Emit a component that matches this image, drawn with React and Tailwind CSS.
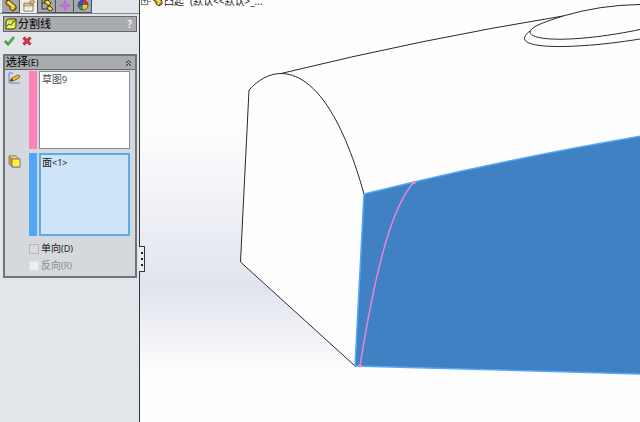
import { useState } from "react";

const uiFont = "font-['Noto_Sans','Noto_Sans_CJK_SC',sans-serif]";

function PartIcon() {
  return (
    <svg viewBox="0 0 14 12" className="w-[14px] h-3 shrink-0">
      <path d="M2 1 L5 0 L12 6 L12 9 L9 11 L6 9 L6 7 L2 4 Z" fill="#dcb91f" stroke="#4b3b08" strokeWidth="1" />
      <path d="M4 2 L10 7 M8 8 L9 9" fill="none" stroke="#fff08a" strokeWidth="1.3" />
      <path d="M3 4 L7 7 M9 10 L11 8" stroke="#7d6208" strokeWidth="0.8" />
    </svg>
  );
}

function PropertyIcon() {
  return (
    <svg viewBox="0 0 14 12" className="w-[14px] h-3">
      <path d="M2 4 H11 V11 H2 Z" fill="#fffdf4" stroke="#8d7b58" />
      <path d="M2 3 H6 L7 4 H11 V6 H2 Z" fill="#dcc38e" stroke="#8a7040" strokeWidth="0.7" />
      <path d="M7 2 L11 0 L13 2 L10 4 Z" fill="#e9b36a" stroke="#85612f" strokeWidth="0.6" />
      <path d="M4 8 H9" stroke="#cfc8b8" />
    </svg>
  );
}

function ConfigIcon() {
  return (
    <svg viewBox="0 0 14 12" className="w-[14px] h-3">
      <path d="M2 0 V9 H7 M2 3 H6" fill="none" stroke="#333" />
      <path d="M4 1 L8 0 L11 3 L9 6 L6 4 Z" fill="#e3c429" stroke="#3f3306" strokeWidth="0.9" />
      <path d="M7 7 L10 6 L13 9 L11 11 L8 10 Z" fill="#e3c429" stroke="#3f3306" strokeWidth="0.9" />
      <path d="M6 2 L9 3 M9 8 L11 9" stroke="#fff08a" />
    </svg>
  );
}

function TargetIcon() {
  return (
    <svg viewBox="0 0 14 12" className="w-[14px] h-3" fill="none" stroke="#b565cd">
      <circle cx="7" cy="5.500" r="3" fill="#d39fe0" />
      <path d="M7 0 V11 M1.500 5.500 H12.500" strokeWidth="1.3" />
    </svg>
  );
}

function AppearanceIcon() {
  return (
    <svg viewBox="0 0 14 12" className="w-[14px] h-3">
      <path d="M7 5 L3 8 A5 5 0 0 1 7 0 Z" fill="#2d4fd0" />
      <path d="M7 5 L7 0 A5 5 0 0 1 12 5 Z" fill="#e3322b" />
      <path d="M7 5 L12 5 A5 5 0 0 1 7 10 Z" fill="#f4d22a" />
      <path d="M7 5 L7 10 A5 5 0 0 1 2.500 7 Z" fill="#2fa53b" />
      <circle cx="7" cy="5" r="5" fill="none" stroke="#4a3b3b" strokeWidth="0.8" />
    </svg>
  );
}

function SplitLineIcon() {
  return (
    <svg viewBox="0 0 12 12" className="w-3 h-3 shrink-0">
      <path d="M1 3 L3 1 H11 V9 L9 11 H1 Z" fill="#e9d926" stroke="#45430f" />
      <path d="M2 4 H9 V10 H2 Z" fill="#fbf27a" />
      <path d="M9 4 L11 1" fill="none" stroke="#45430f" strokeWidth="0.7" />
      <path d="M2 8 L4 6 L6 7 L9 3" fill="none" stroke="#2b9d3a" strokeWidth="1.3" />
    </svg>
  );
}

function CheckIcon() {
  return (
    <svg viewBox="0 0 12 10" className="w-3 h-[10px]">
      <path d="M1 5 L4 8 L10 1" fill="none" stroke="#2a8a38" strokeWidth="2.6" />
      <path d="M1.500 5 L4 7.400 L10 1" fill="none" stroke="#55c261" strokeWidth="1.2" />
    </svg>
  );
}

function CrossIcon() {
  return (
    <svg viewBox="0 0 10 10" className="w-[10px] h-[10px]">
      <path d="M1.500 1.500 L8.500 8.500 M8.500 1.500 L1.500 8.500" stroke="#b8222d" strokeWidth="3" />
      <path d="M2 2 L8 8 M8 2 L2 8" stroke="#dc4853" strokeWidth="1" />
    </svg>
  );
}

function SketchIcon() {
  return (
    <svg viewBox="0 0 14 13" className="w-[14px] h-[13px]">
      <path d="M5 1 H1 V11 H12" fill="none" stroke="#6d7fd6" />
      <path d="M2 9 L4 6 L10 3 L12 4 L11 6 L5 9 Z" fill="#edc42f" stroke="#6b5310" strokeWidth="0.8" />
      <path d="M2 9 L4 6 L5 9 Z" fill="#463712" />
    </svg>
  );
}

function FaceIcon() {
  return (
    <svg viewBox="0 0 13 13" className="w-[13px] h-[13px]">
      <path d="M1 1 H8 L11 4 V12 H4 L1 9 Z" fill="#d9981e" stroke="#6a73b8" strokeWidth="0.8" />
      <path d="M1 1 H8 L11 4 H4 Z" fill="#f7dc59" stroke="#8a6512" strokeWidth="0.6" />
      <rect x="4" y="4" width="8" height="8" fill="#fff136" stroke="#5563b4" strokeWidth="0.8" />
    </svg>
  );
}

function Tab({ label, active, onClick, children }) {
  return (
    <button
      type="button"
      aria-label={label}
      onClick={onClick}
      className={
        active
          ? "w-[18px] h-[13px] flex justify-center items-start overflow-hidden bg-[#e9ebef] border-r border-[#4d5158]"
          : "w-[18px] h-[13px] flex justify-center items-start overflow-hidden bg-[#a5a7ac] border-r border-b border-[#4d5158]"
      }
    >
      {children}
    </button>
  );
}

function Option({ text, hotkey, disabled }) {
  return (
    <label className={disabled ? "flex items-center gap-[2px] h-[17px] text-[#8a8d92]" : "flex items-center gap-[2px] h-[17px] text-[#1b1b1b]"}>
      <input
        type="checkbox"
        disabled={disabled}
        className={
          disabled
            ? "appearance-none w-[10px] h-[10px] bg-[#eeeff1] border border-[#dfe1e3]"
            : "appearance-none w-[10px] h-[10px] bg-[#d9dadc] border border-[#b4b6b9] checked:bg-[#4aa0f5]"
        }
      />
      <span className="text-[10px] leading-3">
        {text}
        <span className="text-[9px]">({hotkey})</span>
      </span>
    </label>
  );
}

function Panel() {
  const [tab, setTab] = useState("property");
  const [open, setOpen] = useState(true);

  const tabs = [
    { id: "part", label: "FeatureManager", icon: <PartIcon /> },
    { id: "property", label: "PropertyManager", icon: <PropertyIcon /> },
    { id: "config", label: "ConfigurationManager", icon: <ConfigIcon /> },
    { id: "target", label: "DimXpertManager", icon: <TargetIcon /> },
    { id: "appearance", label: "DisplayManager", icon: <AppearanceIcon /> },
  ];

  return (
    <aside className="relative w-[140px] shrink-0 bg-[#e2e5ea] border-r border-[#33363a]">
      <div className="flex h-[14px] pl-[2px] border-b border-[#85888e]">
        {tabs.map((t) => (
          <Tab key={t.id} label={t.label} active={tab === t.id} onClick={() => setTab(t.id)}>
            {t.icon}
          </Tab>
        ))}
      </div>

      <div className="pl-[3px] pr-[2px] pt-[2px]">
        <header className="flex items-center gap-px h-4 px-px bg-[#a9abaf] border border-[#64676c]">
          <SplitLineIcon />
          <h1 className="text-[11px] leading-3 font-medium text-[#17181a]">分割线</h1>
          <button type="button" aria-label="帮助" className="ml-auto pr-[3px] text-[10px] leading-3 font-bold text-[#eef0f2]">
            ?
          </button>
        </header>

        <div className="flex items-center gap-[6px] h-[22px] pl-px pb-1">
          <button type="button" aria-label="确定"><CheckIcon /></button>
          <button type="button" aria-label="取消"><CrossIcon /></button>
        </div>

        <section className="bg-[#d5d8dc] border-2 border-[#707378]">
          <button
            type="button"
            aria-expanded={open}
            onClick={() => setOpen(!open)}
            className="flex items-center justify-between w-full h-[14px] px-px bg-[#a9abaf] border-b border-[#64676c]"
          >
            <span className="text-[11px] leading-3 font-medium text-[#17181a]">
              选择<span className="text-[9px]">(E)</span>
            </span>
            <svg viewBox="0 0 7 8" className="w-[7px] h-2 mr-[2px]" fill="none" stroke="#26282b">
              <path d="M1 4 L3.500 1.500 L6 4 M1 7 L3.500 4.500 L6 7" />
            </svg>
          </button>

          {open && (
            <div className="flex flex-col gap-1 pt-px pl-[3px] pr-[5px] pb-[2px]">
              <div className="flex">
                <div className="w-[21px] pt-px"><SketchIcon /></div>
                <div className="w-2 bg-[#fb82bb]" />
                <ul aria-label="草图" className="flex-1 ml-[2px] h-[78px] pl-[2px] bg-white border border-[#858da0] text-[10px] leading-[15px] text-[#4c4f54]">
                  <li>草图<span className="text-[9px]">9</span></li>
                </ul>
              </div>
              <div className="flex">
                <div className="w-[21px] pt-[2px]"><FaceIcon /></div>
                <div className="w-2 bg-[#52a6fa]" />
                <ul aria-label="面" className="flex-1 ml-[2px] h-[83px] pl-px bg-[#cee4f8] border-2 border-[#58aee2] text-[10px] leading-[14px] text-[#1b1b1b]">
                  <li>面<span className="text-[9px]">&lt;1&gt;</span></li>
                </ul>
              </div>
              <div className="pl-[21px]">
                <Option text="单向" hotkey="D" />
                <Option text="反向" hotkey="R" disabled />
              </div>
            </div>
          )}
        </section>
      </div>

      <button
        type="button"
        aria-label="折叠面板"
        className="absolute z-10 top-[246px] left-[139px] w-[6px] h-[26px] flex flex-col items-center justify-center gap-1 bg-[#eceef3] border border-l-0 border-[#33363a]"
      >
        <span className="w-[2px] h-[2px] bg-[#222]" />
        <span className="w-[2px] h-[2px] bg-[#222]" />
        <span className="w-[2px] h-[2px] bg-[#222]" />
      </button>
    </aside>
  );
}

function Model() {
  return (
    <svg viewBox="140 0 500 422" preserveAspectRatio="xMinYMin slice" className="block w-full h-full" fill="none">
      <path
        d="M249 90 C258 80 269 73 281 73 Q422 38 563 16 L640 0 V374 L355 366 L240 262 Z"
        fill="#fefefe"
      />
      <g stroke="#26282a" strokeWidth="1">
        <path d="M355 366 L240.500 262 L249 90 C258 80 269 73.500 281 73.500 C312 74 341 112 364 194" />
        <path d="M281 73.500 Q422 39 563 16" />
        <path d="M563 16 Q600 5 640 4.500" />
        <path d="M563 16 C548 21 531 26 530 32 C531 42 580 42 640 29.500" />
        <path d="M530 31 C526 34 524 37 524.500 39 C527 50 585 48 640 39" />
      </g>
      <path d="M364 194 L414 182 Q520 157 642 136 V374 L355 366 Z" fill="#3f81c3" stroke="#55a8f7" strokeWidth="1.500" />
      <path d="M414 182 C398 200 380 240 360 366" stroke="#e884d8" strokeWidth="1.500" />
      <circle cx="414" cy="182.500" r="1.800" fill="#f08fd0" />
      <circle cx="360" cy="366" r="1.800" fill="#f08fd0" />
    </svg>
  );
}

function FeatureTree() {
  return (
    <div className="absolute top-[-7px] left-px flex items-center h-4 text-[#222]">
      <span className="w-[7px] h-[7px] flex items-center justify-center border border-[#777] text-[8px] leading-none">+</span>
      <span className="w-[2px] border-t border-dotted border-[#888]" />
      <PartIcon />
      <span className="flex gap-[6px] text-[10px] leading-4 whitespace-pre">
        <span>凸起</span>
        <span>(默认&lt;&lt;默认&gt;_...</span>
      </span>
    </div>
  );
}

export default function App() {
  return (
    <div className={`flex min-h-screen overflow-hidden ${uiFont}`}>
      <Panel />
      <main className="relative flex-1 min-w-0 overflow-hidden bg-linear-to-b from-[#fefefe] from-30% via-[#e1e4ee] via-68% to-[#fefefe] to-89%">
        <Model />
        <FeatureTree />
      </main>
    </div>
  );
}
